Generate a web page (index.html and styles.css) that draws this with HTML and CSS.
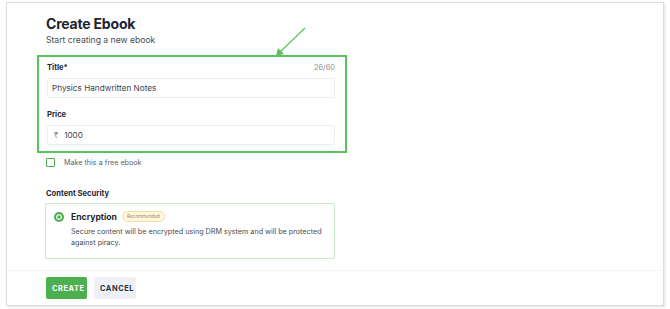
FILE: index.html
```html
<!DOCTYPE html>
<html lang="en">
<head>
  <meta charset="UTF-8" />
  <meta name="viewport" content="width=device-width, initial-scale=1.0"/>
  <title>Create Ebook</title>
  <link rel="stylesheet" href="styles.css">
</head>
<body>

<div class="panel">
  <div class="panel-body">
    <h1>Create Ebook</h1>
    <p class="subtitle">Start creating a new ebook</p>

    <div class="highlight">
      <div class="field">
        <div class="field-head">
          <label>Title*</label>
          <span class="counter">26/60</span>
        </div>
        <div class="input">Physics Handwritten Notes</div>
      </div>
      <div class="field">
        <div class="field-head">
          <label>Price</label>
        </div>
        <div class="input"><span class="currency">₹</span>1000</div>
      </div>
    </div>

    <div class="checkbox-row">
      <span class="checkbox"></span>
      <span>Make this a free ebook</span>
    </div>

    <div class="section-title">Content Security</div>
    <div class="option">
      <span class="radio"></span>
      <div>
        <div class="option-head">
          <span class="option-name">Encryption</span>
          <span class="badge">Recommended</span>
        </div>
        <p class="option-text">Secure content will be encrypted using DRM system and will be protected against piracy.</p>
      </div>
    </div>
  </div>

  <div class="panel-footer">
    <button class="btn btn-create">CREATE</button>
    <button class="btn btn-cancel">CANCEL</button>
  </div>

  <!-- annotation arrow -->
  <svg class="arrow" width="34" height="32" viewBox="0 0 34 32">
    <line x1="32" y1="1" x2="7" y2="25" stroke="#5cc25c" stroke-width="1.2"/>
    <path d="M3 29 L5 21 L11 27 Z" fill="#5cc25c"/>
  </svg>
</div>

</body>
</html>
```

FILE: styles.css
```css
body {
  margin: 0;
  padding: 2px 6px 3px 6px;
  font-family: 'Inter', 'Liberation Sans', sans-serif;
  background: #fff;
  color: #1f2433;
}

.panel {
  position: relative;
  height: 302px;
  border: 1px solid #dcdcdc;
  box-shadow: 1px 1px 2px rgba(0,0,0,0.12);
  display: flex;
  flex-direction: column;
}

.panel-body {
  padding: 12px 0 0 39px;
  flex: 1;
}

h1 {
  margin: 0;
  font-size: 14px;
  font-weight: 700;
  letter-spacing: -0.2px;
  color: #1d2331;
  line-height: 18px;
}

.subtitle {
  margin: 2px 0 0;
  font-size: 8.6px;
  line-height: 11px;
  color: #474b55;
}

.highlight {
  margin: 9px 0 0 -9px;
  width: 288px;
  padding: 4px 10px 6px 8px;
  border: 2px solid #5cc35c;
}

.field + .field {
  margin-top: 10px;
}

.field-head {
  display: flex;
  justify-content: space-between;
  align-items: center;
  height: 12px;
}

.field-head label {
  font-size: 7.6px;
  font-weight: 700;
  color: #1f2433;
}

.counter {
  font-size: 7.4px;
  color: #8a8e98;
}

.input {
  margin-top: 5px;
  height: 18px;
  border: 1px solid #eeeeef;
  border-radius: 2px;
  padding: 0 4px;
  display: flex;
  align-items: center;
  font-size: 8.2px;
  color: #3e424c;
}

.currency {
  color: #8a8e98;
  margin: 0 6px 0 2px;
  font-size: 7.6px;
}

.checkbox-row {
  display: flex;
  align-items: center;
  gap: 9px;
  margin-top: 5px;
  font-size: 7.2px;
  color: #5c606a;
}

.checkbox {
  width: 7px;
  height: 7px;
  border: 1.5px solid #4caf50;
  border-radius: 1px;
}

.section-title {
  margin-top: 22px;
  font-size: 7.6px;
  line-height: 10px;
  font-weight: 700;
  color: #1f2433;
}

.option {
  margin: 4px 0 0 -1px;
  width: 270px;
  padding: 7px 10px 10px 8px;
  border: 1px solid #c6ebc6;
  border-radius: 2px;
  display: flex;
  gap: 7px;
}

.radio {
  flex: none;
  width: 6px;
  height: 6px;
  margin-top: 1px;
  border: 2px solid #4caf50;
  border-radius: 50%;
  background: #4caf50;
  box-shadow: inset 0 0 0 1.2px #fff;
}

.option-head {
  display: flex;
  align-items: center;
  gap: 5px;
}

.option-name {
  font-size: 8.6px;
  font-weight: 700;
  color: #1f2433;
}

.badge {
  font-size: 4.6px;
  color: #9c8a5e;
  background: #fff7e0;
  border: 1px solid #f6dda0;
  border-radius: 6px;
  padding: 2px 4px;
}

.option-text {
  margin: 4px 0 0;
  font-size: 7.2px;
  line-height: 11px;
  color: #474b55;
}

.panel-footer {
  border-top: 1px solid #f4f4f4;
  padding: 6px 0 6px 39px;
  display: flex;
  gap: 7px;
}

.btn {
  height: 22px;
  border: none;
  border-radius: 2px;
  padding: 0 6px;
  font-family: inherit;
  font-size: 7.4px;
  font-weight: 700;
  letter-spacing: 0.6px;
  cursor: pointer;
}

.btn-create {
  width: 41px;
  background: #4caf50;
  color: #fff;
}

.btn-cancel {
  width: 42px;
  background: #edf0f6;
  color: #2b3040;
}

.arrow {
  position: absolute;
  left: 266px;
  top: 24px;
}
```
